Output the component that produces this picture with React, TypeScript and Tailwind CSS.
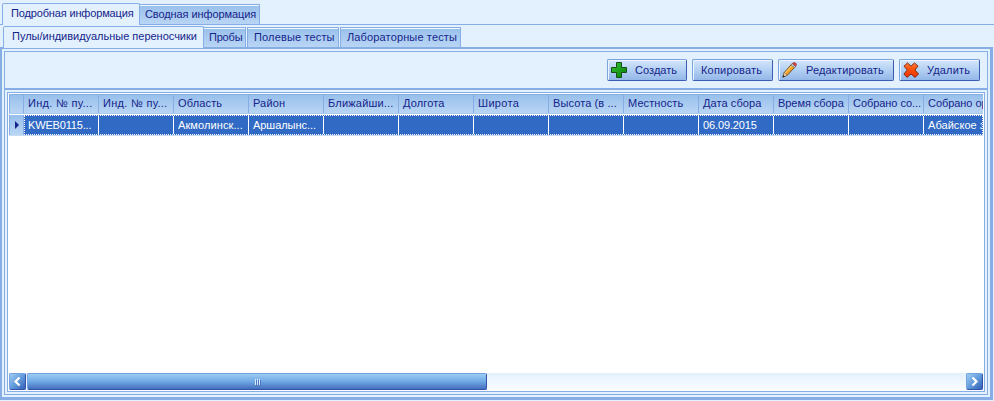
import type { ReactNode } from "react";

const columns = [
  { title: "Инд. № пу...", value: "KWEB0115...", t: "tracking-[0.3px]", v: "tracking-[-0.17px]" },
  { title: "Инд. № пу...", value: "", t: "tracking-[0.3px]", v: "" },
  { title: "Область", value: "Акмолинск...", t: "tracking-[0.15px]", v: "tracking-[0.1px]" },
  { title: "Район", value: "Аршалынс...", t: "tracking-[0.15px]", v: "tracking-[-0.05px]" },
  { title: "Ближайши...", value: "", t: "tracking-[0.2px]", v: "" },
  { title: "Долгота", value: "", t: "tracking-[0.15px]", v: "" },
  { title: "Широта", value: "", t: "tracking-[0.3px]", v: "" },
  { title: "Высота (в ...", value: "", t: "tracking-[0.1px]", v: "" },
  { title: "Местность", value: "", t: "tracking-[0.1px]", v: "" },
  { title: "Дата сбора", value: "06.09.2015", t: "tracking-[0.08px]", v: "tracking-[-0.12px]" },
  { title: "Время сбора", value: "", t: "tracking-[-0.05px]", v: "" },
  { title: "Собрано со...", value: "", t: "tracking-[-0.05px]", v: "" },
  { title: "Собрано ор", value: "Абайское з", t: "tracking-[-0.05px]", v: "tracking-[0.05px]" },
];

function ActiveTab({ className, children }: { className: string; children: ReactNode }) {
  return (
    <div className={`relative z-10 shrink-0 rounded-t-[2px] border-x border-t border-[#86aee4] bg-[#e3f1fe] text-[#15248a] ${className}`}>
      {children}
    </div>
  );
}

function Tab({ className, children }: { className: string; children: ReactNode }) {
  return (
    <div className={`shrink-0 border-x border-t border-[#86aee4] bg-linear-to-b from-[#98c0ec] to-[#b9d5f4] text-[#15248a] shadow-[inset_0_1px_0_#f2f8ff] ${className}`}>
      {children}
    </div>
  );
}

function Button({ className, icon, children }: { className: string; icon?: ReactNode; children: ReactNode }) {
  return (
    <button className={`flex h-[22px] shrink-0 items-center rounded-[2px] border border-t-[#7ba3de] border-l-[#7ba3de] border-r-[#3c5cb4] border-b-[#3c5cb4] bg-linear-to-b from-[#d4e6fb] via-[#b3d0f3] to-[#93b7e8] text-[#15248a] shadow-[inset_1px_1px_0_#edf6ff] ${className}`}>
      {icon}
      <span>{children}</span>
    </button>
  );
}

const PlusIcon = () => (
  <svg width="17" height="17" viewBox="0 0 17 17" className="shrink-0">
    <defs>
      <linearGradient id="plus" x1="0" y1="0" x2="1" y2="1">
        <stop offset="0" stopColor="#35c432" />
        <stop offset="1" stopColor="#067d07" />
      </linearGradient>
    </defs>
    <path d="M6.5 .5h5v5h5v5h-5v5h-5v-5h-5v-5h5z" fill="url(#plus)" stroke="#174f18" />
  </svg>
);

const PencilIcon = () => (
  <svg width="15" height="16" viewBox="0 0 15 16" className="shrink-0">
    <path d="M1 15l1.2-4.5L9.8 2l3.4 2.8L5.3 13.2z" fill="#f3a52b" stroke="#5f4528" strokeWidth=".9" />
    <path d="M3 11L10.3 3.1" stroke="#ffd978" strokeWidth="1" />
    <path d="M1 15l1.2-4.5 3.1 2.7z" fill="#f6dfb5" stroke="#6d5842" strokeWidth=".6" />
    <path d="M.5 15.5l.8-2.6 1.8 1.7z" fill="#222" />
    <path d="M9 2.9l1.3-1.4 3.4 2.7-1.2 1.4z" fill="#c5cbd2" stroke="#555" strokeWidth=".5" />
    <path d="M10.4 1.4Q12 -.2 13.7 1.1t0 3.2z" fill="#e33e45" stroke="#7d3435" strokeWidth=".6" />
  </svg>
);

const CrossIcon = () => (
  <svg width="17" height="17" viewBox="0 0 17 17" className="shrink-0">
    <defs>
      <linearGradient id="cross" x1="0" y1="0" x2="0" y2="1">
        <stop offset="0" stopColor="#ff7a3c" />
        <stop offset=".5" stopColor="#fb4a05" />
        <stop offset="1" stopColor="#e93507" />
      </linearGradient>
    </defs>
    <path d="M4.5 .9L8 4.2 11.5 .9 15 4.2 11.9 8 15.6 12 12 15.4 8 12 4 15.4.9 12 4.3 8 1 4.2z" fill="url(#cross)" stroke="#7e2a14" strokeLinejoin="round" />
  </svg>
);

function ScrollButton({ direction }: { direction: "left" | "right" }) {
  return (
    <div className="flex h-[17px] w-[17px] shrink-0 items-center justify-center rounded-[2px] border border-t-[#72a3df] border-l-[#72a3df] border-r-[#3154a8] border-b-[#3154a8] bg-linear-to-br from-[#a0cdf4] via-[#639bdc] to-[#375fb4]">
      <svg width="9" height="9" viewBox="0 0 9 9" fill="none" stroke="white" strokeWidth="2.2">
        <path d={direction === "left" ? "M6.5 .5L2.5 4.5L6.5 8.5" : "M2.5 .5L6.5 4.5L2.5 8.5"} />
      </svg>
    </div>
  );
}

export default function App() {
  return (
    <div className="flex h-[401px] w-[994px] flex-col overflow-hidden bg-[#e3f1fe] font-['Liberation_Sans',Arial,sans-serif] text-[11px] leading-[13px] whitespace-nowrap">
      <div className="flex h-[25px] shrink-0 items-end border-b border-[#86aee4] pl-[2px]">
        <ActiveTab className="-mb-px h-[22px] w-[138px] pt-[3px] pl-[8px] tracking-[-0.15px]">Подробная информация</ActiveTab>
        <Tab className="-ml-px h-[20px] w-[121px] pt-[3px] pl-[5px] tracking-[-0.09px]">Сводная информация</Tab>
      </div>

      <div className="flex h-[22px] shrink-0 items-end pl-[3px]">
        <ActiveTab className="-mb-px h-[22px] w-[201px] pt-[3px] pl-[8px] tracking-[-0.01px]">Пулы/индивидуальные переносчики</ActiveTab>
        <Tab className="-ml-px h-[20px] w-[43px] pt-[3px] pl-[5px] tracking-[-0.2px]">Пробы</Tab>
        <Tab className="ml-px h-[20px] w-[92px] pt-[3px] pl-[6px] tracking-[0.15px]">Полевые тесты</Tab>
        <Tab className="ml-px h-[20px] w-[121px] pt-[3px] pl-[6px] tracking-[0.14px]">Лабораторные тесты</Tab>
      </div>

      <div className="h-[353px] w-[993px] shrink-0 border-t-2 border-r-3 border-b-3 border-l-2 border-[#86aee4] px-[2px] pt-[2px] pb-[2px]">
        <div className="flex h-[344px] w-[984px] flex-col border border-[#86aee4]">
          <div className="flex h-[38px] shrink-0 items-center justify-end gap-[5px] border-b-2 border-[#86aee4] pr-[7px]">
            <Button className="w-[80px] gap-[8px] pl-[2px] tracking-[0.05px]" icon={<PlusIcon />}>Создать</Button>
            <Button className="w-[81px] pl-[8px] tracking-[0.2px]">Копировать</Button>
            <Button className="w-[116px] gap-[9px] pl-[3px] tracking-[0.15px]" icon={<PencilIcon />}>Редактировать</Button>
            <Button className="w-[81px] gap-[7px] pl-[3px] tracking-[0.15px]" icon={<CrossIcon />}>Удалить</Button>
          </div>

          <div className="mx-[2px] mt-[2px] flex h-[300px] flex-col border border-[#86aee4] bg-white p-px">
            <div className="flex h-[20px] shrink-0 overflow-hidden border-t border-b border-t-[#86aee4] border-b-[#a8c8ee] bg-linear-to-b from-[#98c0ec] to-[#b9d5f4] text-[#15248a]">
              <div className="w-[15px] shrink-0 border-x border-[#86aee4]" />
              {columns.map((c, i) => (
                <div key={i} className={`w-[75px] shrink-0 border-r border-[#86aee4] pt-[2px] pl-[4px] ${c.t}`}>{c.title}</div>
              ))}
            </div>
            <div className="mt-px flex h-[21px] shrink-0 overflow-hidden border-b border-[#c6dcf5] text-white">
              <div className="flex w-[15px] shrink-0 items-center border-x border-[#86aee4] bg-linear-to-b from-[#98c0ec] to-[#b9d5f4] pl-[5px]">
                <div className="border-y-4 border-l-4 border-y-transparent border-l-[#15248a]" />
              </div>
              <div className="flex flex-1 overflow-hidden border border-dotted border-white bg-[#316ac5]">
                {columns.map((c, i) => (
                  <div key={i} className={`shrink-0 border-r border-white pt-[3px] ${i === 0 ? "w-[74px] pl-[3px]" : "w-[75px] pl-[4px]"} ${c.v}`}>{c.value}</div>
                ))}
              </div>
            </div>
            <div className="flex-1" />
            <div className="flex h-[17px] shrink-0 bg-linear-to-b from-[#e3f1fe] to-[#fafdff]">
              <ScrollButton direction="left" />
              <div className="ml-px flex w-[460px] items-center justify-center rounded-[2px] border border-t-[#72a3df] border-l-[#72a3df] border-r-[#3154a8] border-b-[#3154a8] bg-linear-to-b from-[#9bccf4] via-[#6fa8e4] to-[#456fbd]">
                <div className="flex gap-px">
                  <i className="h-[6px] w-px bg-[#d5e8fc] shadow-[1px_1px_0_#4c76bd]" />
                  <i className="h-[6px] w-px bg-[#d5e8fc] shadow-[1px_1px_0_#4c76bd]" />
                  <i className="h-[6px] w-px bg-[#d5e8fc] shadow-[1px_1px_0_#4c76bd]" />
                </div>
              </div>
              <div className="flex-1" />
              <ScrollButton direction="right" />
            </div>
          </div>
        </div>
      </div>
    </div>
  );
}
